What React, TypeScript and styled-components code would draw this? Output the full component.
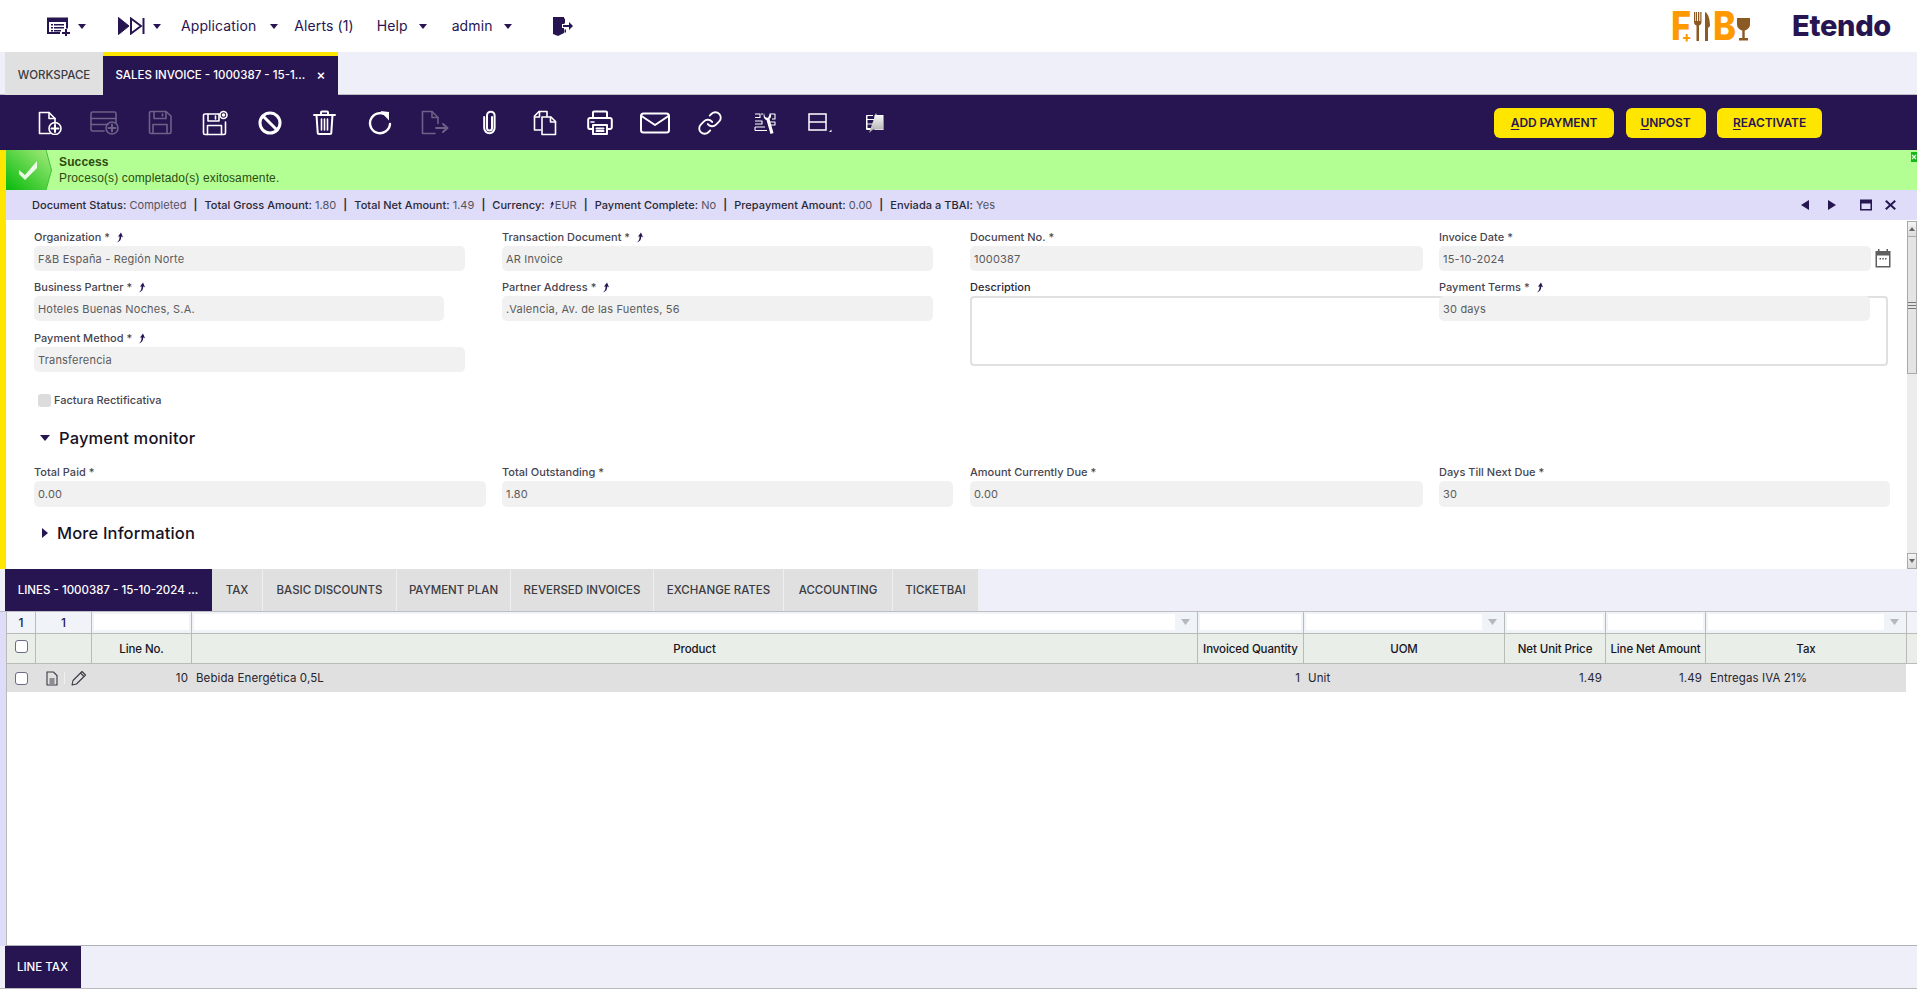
import React from "react";
import styled, { createGlobalStyle } from "styled-components";
import { Link as LinkIcon } from "lucide-react";

const NAVY = "#271552";
const YELLOW = "#FEE600";
const LILAC = "#DEDCF8";
const PALE = "#EEEFF8";
const TABGRAY = "#E0E0E0";
const LINE = "#B7BCB7";

const Global = createGlobalStyle`
  html, body { margin: 0; padding: 0; height: 100%; background: #fff; overflow: hidden; }
  body { font-family: "Inter", "Liberation Sans", sans-serif; color: ${NAVY}; }
  #root { height: 100%; }
  * { box-sizing: border-box; }
`;

const Page = styled.div`
  width: 1917px;
  height: 989px;
  display: flex;
  flex-direction: column;
  overflow: hidden;
`;

/* ---------- top nav ---------- */
const NavBar = styled.header`
  height: 52px;
  flex: none;
  display: flex;
  align-items: center;
  padding-left: 47px;
  padding-right: 26px;
  background: #fff;
`;
const NavItem = styled.div<{ $ml: number }>`
  margin-left: ${(p) => p.$ml}px;
  display: flex;
  align-items: center;
  font-size: 14px;
  line-height: 20px;
  letter-spacing: 0.1px;
  color: ${NAVY};
`;
const NavCaret = styled.i<{ $ml: number }>`
  display: block;
  margin-left: ${(p) => p.$ml}px;
  width: 0;
  height: 0;
  border-left: 4.5px solid transparent;
  border-right: 4.5px solid transparent;
  border-top: 5px solid ${NAVY};
`;
const Brand = styled.div`
  margin-left: auto;
  display: flex;
  align-items: center;
  gap: 41px;
`;
const Wordmark = styled.span`
  font-size: 29px;
  line-height: 32px;
  font-weight: 800;
  letter-spacing: -0.3px;
  color: ${NAVY};
`;

/* ---------- tab strips ---------- */
const TabBar = styled.nav`
  height: 43px;
  flex: none;
  display: flex;
  padding-left: 5px;
  background: ${PALE};
  border-bottom: 1px solid #bdbdc4;
`;
const Tab = styled.div<{ $w: number; $active?: boolean }>`
  width: ${(p) => p.$w}px;
  flex: none;
  display: flex;
  align-items: center;
  justify-content: center;
  gap: 11px;
  padding-top: ${(p) => (p.$active ? 0 : 0)}px;
  font-size: 11.5px;
  font-weight: 500;
  white-space: nowrap;
  background: ${(p) => (p.$active ? NAVY : TABGRAY)};
  color: ${(p) => (p.$active ? "#fff" : "#3b3b42")};
  border-right: 1px solid ${(p) => (p.$active ? NAVY : "#efeff2")};
`;
const MainTab = styled(Tab)`
  border-top: 4px solid ${(p) => (p.$active ? YELLOW : TABGRAY)};
  border-right: none;
  padding-bottom: 2px;
  margin-bottom: -1px;
`;
const TabClose = styled.span`
  font-size: 14px;
  line-height: 14px;
  color: #fff;
`;

/* ---------- toolbar ---------- */
const Toolbar = styled.div`
  height: 55px;
  flex: none;
  display: flex;
  align-items: center;
  padding-left: 22px;
  padding-right: 95px;
  background: ${NAVY};
`;
const ToolSlot = styled.div<{ $disabled?: boolean }>`
  width: 55px;
  height: 30px;
  flex: none;
  display: flex;
  align-items: center;
  justify-content: center;
  color: ${(p) => (p.$disabled ? "#6c6186" : "#fff")};
`;
const ActionGroup = styled.div`
  margin-left: auto;
  display: flex;
  gap: 11.5px;
`;
const ActionButton = styled.button<{ $w: number }>`
  width: ${(p) => p.$w}px;
  height: 30px;
  border: none;
  border-radius: 6px;
  background: ${YELLOW};
  color: ${NAVY};
  font-family: inherit;
  font-size: 12px;
  font-weight: 600;
  letter-spacing: -0.1px;
  padding: 0;
  u { text-underline-offset: 2px; }
`;

/* ---------- header area with yellow strip ---------- */
const HeaderPane = styled.section`
  height: 419px;
  flex: none;
  display: flex;
  flex-direction: column;
  border-left: 6px solid ${YELLOW};
`;
const MessageBar = styled.div`
  height: 40px;
  flex: none;
  position: relative;
  display: flex;
  background: #b3ff94;
  font-family: "Liberation Sans", Arial, sans-serif;
  font-size: 12px;
  color: #2f4a10;
`;
const MessageTexts = styled.div`
  margin-left: 7px;
  padding-top: 5px;
  display: flex;
  flex-direction: column;
  gap: 2px;
  line-height: 14px;
  letter-spacing: 0.13px;
`;
const MessageTitle = styled.strong`
  font-weight: 700;
`;
const MessageClose = styled.svg`
  position: absolute;
  right: 0;
  top: 2px;
`;
const StatusBar = styled.div`
  height: 30px;
  flex: none;
  display: flex;
  align-items: center;
  padding-left: 26px;
  background: ${LILAC};
  font-size: 11px;
  letter-spacing: 0.03px;
  color: #55535f;
  white-space: nowrap;
  b { font-weight: 500; color: #2a2836; }
  em { font-style: normal; font-weight: 600; color: #2a2836; margin: 0 7px; }
`;
const StatusTools = styled.div`
  margin-left: auto;
  display: flex;
  align-items: center;
  padding-right: 20px;
`;
const FormRow = styled.div`
  flex: 1;
  min-height: 0;
  display: flex;
`;
const FormBody = styled.div`
  flex: 1;
  min-width: 0;
  padding: 8px 0 0 28px;
`;
const FieldGrid = styled.div`
  display: grid;
  grid-template-columns: 468px 468px 469px 452px;
`;
const Field = styled.div<{ $span?: number; $gap?: number }>`
  grid-row: span ${(p) => p.$span ?? 1};
  padding-bottom: ${(p) => p.$gap ?? 7}px;
`;
const Label = styled.label<{ $strong?: boolean }>`
  height: 18px;
  display: flex;
  align-items: center;
  gap: 5px;
  font-size: 11px;
  font-weight: 500;
  letter-spacing: 0.02px;
  color: ${(p) => (p.$strong ? "#2a2836" : "#46444f")};
  white-space: nowrap;
`;
const InputRow = styled.div`
  display: flex;
  align-items: center;
  gap: 4px;
`;
const Input = styled.div<{ $w: number; $h?: number }>`
  width: ${(p) => p.$w}px;
  height: ${(p) => p.$h ?? 25}px;
  flex: none;
  display: flex;
  align-items: center;
  padding-left: 4px;
  background: #f1f1f1;
  border-radius: 5px;
  font-size: 11px;
  letter-spacing: 0.2px;
  color: #5b5b5b;
`;
const TextArea = styled.div`
  width: 918px;
  height: 70px;
  background: #fff;
  border: 2px solid #e0e0e0;
  border-radius: 4px;
`;
const CheckRow = styled.div`
  margin: 20px 0 0 4px;
  display: flex;
  align-items: center;
  gap: 3px;
  font-size: 11px;
  font-weight: 500;
  color: #46444f;
`;
const FakeCheck = styled.span`
  width: 13px;
  height: 13px;
  border-radius: 3px;
  background: #dcdcdc;
`;
const Section = styled.div<{ $mt: number }>`
  margin-top: ${(p) => p.$mt}px;
  height: 24px;
  display: flex;
  align-items: center;
  gap: 7px;
  padding-left: 6px;
  font-size: 16.5px;
  font-weight: 500;
  letter-spacing: 0.15px;
  color: #15121f;
`;
const SectionFields = styled(FieldGrid)`
  margin-top: 13px;
`;
const CaretDown = styled.i`
  width: 0;
  height: 0;
  margin-right: 2px;
  border-left: 5px solid transparent;
  border-right: 5px solid transparent;
  border-top: 6px solid ${NAVY};
`;
const CaretRight = styled.i`
  width: 0;
  height: 0;
  margin: 0 2px 0 2px;
  border-top: 5px solid transparent;
  border-bottom: 5px solid transparent;
  border-left: 6px solid ${NAVY};
`;
const Scrollbar = styled.div`
  width: 10px;
  flex: none;
  margin-top: 1px;
  display: flex;
  flex-direction: column;
  background: #ececec;
`;
const ScrollButton = styled.div`
  height: 16px;
  flex: none;
  display: flex;
  align-items: center;
  justify-content: center;
  border: 1px solid #a9a9a9;
  background: linear-gradient(#f4f4f4, #dcdcdc);
`;
const ScrollThumb = styled.div`
  height: 137px;
  flex: none;
  display: flex;
  align-items: center;
  justify-content: center;
  border: 1px solid #a9a9a9;
  border-top: none;
  background: #e4e4e4;
`;
const ScrollTrack = styled.div`
  flex: 1;
`;

/* ---------- grid ---------- */
const COLS = "29px 56px 100px 1006px 106px 201px 101px 100px 201px 1fr";
const GridPane = styled.section`
  flex: 1;
  min-height: 0;
  display: flex;
  flex-direction: column;
  border-left: 6px solid ${LILAC};
`;
const GridFrame = styled.div`
  flex: 1;
  border-left: 1px solid ${LINE};
  border-bottom: 1px solid #b0b0b8;
  background: #fff;
`;
const FilterRow = styled.div`
  height: 22px;
  display: grid;
  grid-template-columns: ${COLS};
  background: #f0f3f8;
  border-bottom: 1px solid ${LINE};
`;
const FilterCell = styled.div`
  display: flex;
  align-items: stretch;
  padding: 2px 2px 3px 2px;
  border-right: 1px solid ${LINE};
  &:last-child { border-right: none; }
`;
const CountCell = styled(FilterCell)`
  align-items: center;
  justify-content: center;
  font-size: 12px;
  font-weight: 500;
  color: ${NAVY};
`;
const FilterInput = styled.div`
  flex: 1;
  background: #fff;
`;
const FilterArrow = styled.div`
  width: 20px;
  flex: none;
  display: flex;
  align-items: center;
  justify-content: center;
`;
const HeaderRow = styled.div`
  height: 30px;
  display: grid;
  grid-template-columns: ${COLS};
  background: #e9eee8;
  border-bottom: 1px solid ${LINE};
`;
const HeaderCell = styled.div`
  display: flex;
  align-items: center;
  justify-content: center;
  border-right: 1px solid ${LINE};
  font-size: 11.5px;
  font-weight: 500;
  letter-spacing: -0.1px;
  color: #17141f;
  white-space: nowrap;
  overflow: hidden;
  &:last-child { border-right: none; }
`;
const BoxCell = styled(HeaderCell)`
  align-items: flex-start;
  padding-top: 6px;
`;
const CheckBox = styled.span`
  width: 13px;
  height: 13px;
  display: block;
  background: #fff;
  border: 1px solid #6c6a86;
  border-radius: 3px;
`;
const DataRow = styled.div`
  height: 28px;
  width: 1899px;
  display: grid;
  grid-template-columns: 29px 56px 100px 1006px 106px 201px 101px 100px 201px;
  background: ${TABGRAY};
  font-size: 11.5px;
  letter-spacing: 0.1px;
  color: #26242e;
`;
const DataCell = styled.div<{ $right?: boolean }>`
  display: flex;
  align-items: center;
  justify-content: ${(p) => (p.$right ? "flex-end" : "flex-start")};
  padding: 0 4px;
  white-space: nowrap;
`;
const RowIcons = styled(DataCell)`
  gap: 6px;
  padding: 0 0 0 10px;
`;
const RowCheckCell = styled(DataCell)`
  justify-content: center;
  padding: 0;
`;
const RowDivider = styled.span`
  width: 1px;
  height: 12px;
  background: #efefef;
`;
const BottomBar = styled(TabBar)`
  border-bottom: 1px solid #b9b9c0;
`;

/* ---------- icons ---------- */
const Ico: React.FC<{ w: number; h: number; children: React.ReactNode }> = ({ w, h, children }) => (
  <svg width={w} height={h} viewBox={`0 0 ${w} ${h}`} fill="none" stroke="currentColor" strokeWidth={1.6} strokeLinejoin="round" strokeLinecap="round">
    {children}
  </svg>
);
const PlusDisc: React.FC<{ cx: number; cy: number; r?: number }> = ({ cx, cy, r = 6 }) => (
  <>
    <circle cx={cx} cy={cy} r={r} />
    <path d={`M${cx - r + 2.5} ${cy}h${2 * r - 5}M${cx} ${cy - r + 2.5}v${2 * r - 5}`} strokeWidth={2} />
  </>
);
const Arrow: React.FC = () => (
  <svg width="9" height="11" viewBox="0 0 9 11" fill={NAVY}>
    <path d="M2 10.5 C4.2 8.6 4.8 6.6 4.4 4.2 L2.8 4.8 L6 0.5 L8 5.2 L6.2 4.6 C6.4 7.4 5 9.6 2 10.5Z" />
  </svg>
);
const TinyArrow: React.FC = () => (
  <svg width="7" height="8" viewBox="0 0 9 11" fill={NAVY}>
    <path d="M2 10.5 C4.2 8.6 4.8 6.6 4.4 4.2 L2.8 4.8 L6 0.5 L8 5.2 L6.2 4.6 C6.4 7.4 5 9.6 2 10.5Z" />
  </svg>
);
const GreyDown: React.FC = () => (
  <svg width="9" height="6" viewBox="0 0 9 6"><path d="M0 0h9L4.5 6z" fill="#b5b8bd" /></svg>
);

const TOOLS: { d?: boolean; node: React.ReactNode }[] = [
  { node: <Ico w={24} h={24}><path d="M12 22.5H1.5v-21H11l6 6v5" /><path d="M11 1.5v6h6" /><PlusDisc cx={17} cy={17.5} /></Ico> },
  { d: true, node: <Ico w={29} h={25}><path d="M14 21H2.5a1.5 1.5 0 0 1-1.5-1.5v-16A1.5 1.5 0 0 1 2.5 2h22A1.5 1.5 0 0 1 26 3.500v10" /><path d="M1 8.500h25M1 14.500h17" /><PlusDisc cx={22} cy={18} /></Ico> },
  { d: true, node: <Ico w={24} h={25}><path d="M3 1.500h15l5 4.500v16a1.500 1.500 0 0 1-1.500 1.500H3A1.500 1.500 0 0 1 1.500 22V3A1.500 1.500 0 0 1 3 1.500z" /><path d="M6 1.500v7h12v-7M14.500 4v2M5 23.500v-9h14v9" /></Ico> },
  { node: <Ico w={26} h={26}><path d="M17 4H3a1.500 1.500 0 0 0-1.500 1.500V23A1.500 1.500 0 0 0 3 24.500h19a1.500 1.500 0 0 0 1.500-1.500V12" /><path d="M6 4v7h11V4M13.500 6v3M5.500 24.500v-9h14v9" /><circle cx="21.500" cy="5" r="3.500" /><circle cx="21.500" cy="5" r="1" fill="currentColor" /></Ico> },
  { node: <Ico w={24} h={24}><circle cx="12" cy="12" r="10" strokeWidth={3} /><path d="M5 5l14 14" strokeWidth={3} /></Ico> },
  { node: <Ico w={23} h={25}><path d="M1 5h21M8 5V2.500A1 1 0 0 1 9 1.500h5a1 1 0 0 1 1 1V5" strokeWidth={2} /><path d="M3.500 5l1.200 17.500A1.500 1.500 0 0 0 6.200 24h10.600a1.500 1.500 0 0 0 1.500-1.500L19.500 5" strokeWidth={2} /><path d="M8.500 9v11M11.500 9v11M14.500 9v11" /></Ico> },
  { node: <Ico w={25} h={25}><path d="M20.500 6.500A10 10 0 1 0 23 14" strokeWidth={2.400} /><path d="M13.500 1l8.500 1v8.500z" fill="currentColor" stroke="none" /></Ico> },
  { d: true, node: <Ico w={28} h={25}><path d="M14 23.500H1.500v-22H11l6 6v6" /><path d="M11 1.500v6h6" /><path d="M15 18h11M22 14l4.500 4-4.500 4" strokeWidth={2} /></Ico> },
  { node: <Ico w={17} h={25}><path d="M12.500 6.500V18a4 4 0 0 1-8 0V6a4.500 4.500 0 0 1 4.500-4.500" transform="translate(0 0)" strokeWidth={0} /><path d="M11 7v11a2.500 2.500 0 0 1-5 0V5.500a3.800 3.800 0 0 1 7.600 0V18a5.200 5.200 0 0 1-10.400 0V7" strokeWidth={2} /></Ico> },
  { node: <Ico w={24} h={26}><path d="M8 20H1.500V6L6 1.500h8v5" /><path d="M6.500 1.500V7H1.500" /><path d="M9 7h9l4.500 4.500V24.500H9z" /><path d="M17.500 7v5h5" /></Ico> },
  { node: <Ico w={26} h={25}><path d="M6 8V2.500A1 1 0 0 1 7 1.500h12a1 1 0 0 1 1 1V8" strokeWidth={2} /><path d="M6 19H3a1.800 1.800 0 0 1-1.800-1.800V9.800A1.800 1.800 0 0 1 3 8h20a1.800 1.800 0 0 1 1.800 1.800v7.400A1.800 1.800 0 0 1 23 19h-3" strokeWidth={2} /><path d="M6 15h14v9H6zM9.500 18.500h7M9.500 21h7" strokeWidth={2} /><path d="M4 12h3" /></Ico> },
  { node: <Ico w={30} h={22}><rect x="1" y="1.500" width="28" height="19" rx="2.500" strokeWidth={2} /><path d="M1.500 4l13.500 9L28.500 4" strokeWidth={2} /></Ico> },
  { node: <LinkIcon size={26} strokeWidth={1.7} /> },
  { node: <Ico w={22} h={22}><path d="M1 2h5v3.500H1M9 2H7M15.500 2H21v5h-3M1 9h7v3H1M16 10h5v3h-4M1 15h10M1 18.500h12M1 15v3.500" strokeWidth={1.100} strokeLinecap="butt" /><path d="M10 1l1 4 3 1 2-4.500a3.500 3.500 0 0 1-.500 5.500l4 14-3 1L12.500 8C10 7.500 9 4 10 1z" fill="currentColor" stroke="none" /></Ico> },
  { node: <svg width="24" height="20" viewBox="0 0 24 20" fill="none" stroke="currentColor" strokeWidth={1.500}><rect x="1" y="1" width="17" height="16" /><path d="M1 9h17" /><path d="M21 19h2.500v-2.500z" fill="currentColor" stroke="none" /></svg> },
  { node: <svg width="20" height="22" viewBox="0 0 20 22" fill="none" stroke="currentColor" strokeWidth={1}><path d="M8 3.500H2v13h6M1 7.500h9M1 12h8M3 3.500L1.500 3.500v14h6" /><rect x="10" y="3.500" width="8" height="14" /><path d="M4 21L11 1l1 3 6 0v13.500H8z" fill="url(#pen)" stroke="none" /><defs><linearGradient id="pen" x1="0" y1="0" x2="0" y2="1"><stop offset="0" stopColor="#fff" /><stop offset="1" stopColor="#aaa" /></linearGradient></defs></svg> },
];

const STATUS: [string, React.ReactNode][] = [
  ["Document Status:", "Completed"],
  ["Total Gross Amount:", "1.80"],
  ["Total Net Amount:", "1.49"],
  ["Currency:", <><TinyArrow /> EUR</>],
  ["Payment Complete:", "No"],
  ["Prepayment Amount:", "0.00"],
  ["Enviada a TBAI:", "Yes"],
];

const SUBTABS: [string, number][] = [
  ["TAX", 51],
  ["BASIC DISCOUNTS", 134],
  ["PAYMENT PLAN", 114],
  ["REVERSED INVOICES", 143],
  ["EXCHANGE RATES", 130],
  ["ACCOUNTING", 109],
  ["TICKETBAI", 86],
];

export default function App() {
  return (
    <Page>
      <Global />
      <NavBar>
        <NavItem $ml={0}>
          <svg width="23" height="20" viewBox="0 0 23 20" fill={NAVY}>
            <path fillRule="evenodd" d="M0 1.500h21v11h-2V6H2v10h11v2H0zM4 8h2v1.500H4zm3 0h10v1.500H7zM4 11h2v1.500H4zm3 0h10v1.500H7zM4 14h2v1.500H4zm3 0h7v1.500H7z" />
            <path d="M18 13h2v3h3v2h-3v2h-2v-2h-3v-2h3z" />
          </svg>
          <NavCaret $ml={8} />
        </NavItem>
        <NavItem $ml={32}>
          <svg width="27" height="18" viewBox="0 0 27 18" fill="none" stroke={NAVY}>
            <path d="M0.500 0.500L11 9 .5 17.500z" fill={NAVY} />
            <path d="M13 1.500L23 9 13 16.500z" strokeWidth={2} />
            <path d="M25.500 1v16" strokeWidth={2} />
          </svg>
          <NavCaret $ml={8} />
        </NavItem>
        <NavItem $ml={20}>Application<NavCaret $ml={14} /></NavItem>
        <NavItem $ml={16}>Alerts (1)</NavItem>
        <NavItem $ml={23}>Help<NavCaret $ml={11} /></NavItem>
        <NavItem $ml={25}>admin<NavCaret $ml={11} /></NavItem>
        <NavItem $ml={41}>
          <svg width="20" height="19" viewBox="0 0 20 19" fill={NAVY}>
            <path d="M0 0h11v7H9v4h2v5l-6 3-5-2z" />
            <path d="M12 0v6.500h-1.500V1.500H12zM11.500 12.500H13v3h-1.500z" />
            <path d="M10 8h6V5l4 4-4 4v-3h-6z" />
          </svg>
        </NavItem>
        <Brand>
          <svg width="80" height="31" viewBox="0 0 80 31">
            <text x="0" y="29" fontFamily="Inter, sans-serif" fontWeight="800" fontSize="40" fill="#FF9900" textLength="20" lengthAdjust="spacingAndGlyphs">F</text>
            <text x="11" y="31" fontFamily="Inter, sans-serif" fontWeight="800" fontSize="14" fill="#FF9900">+</text>
            <path d="M23 1v10c0 2 1 3 2.500 3.500V30h2.500V14.500C29.500 14 30.500 13 30.500 11V1h-1.200v9h-1V1h-1.300v9h-1V1h-1.300v9h-.7V1z" fill="#8B5A24" />
            <path d="M34 30V1c3 1 5 7 5 14l-2 2v13z" fill="#8B5A24" />
            <text x="42" y="29" fontFamily="Inter, sans-serif" fontWeight="800" fontSize="40" fill="#FF9900" textLength="23" lengthAdjust="spacingAndGlyphs">B</text>
            <path d="M66 7h13v6c0 4-3 6-5.300 6.500V27H77v2.500H68V27h3.300v-7.500C69 19 66 17 66 13z" fill="#8B5A24" />
          </svg>
          <Wordmark>Etendo</Wordmark>
        </Brand>
      </NavBar>

      <TabBar>
        <MainTab $w={98}>WORKSPACE</MainTab>
        <MainTab $w={235} $active>SALES INVOICE - 1000387 - 15-1...<TabClose>×</TabClose></MainTab>
      </TabBar>

      <Toolbar>
        {TOOLS.map((t, i) => (
          <ToolSlot key={i} $disabled={t.d}>{t.node}</ToolSlot>
        ))}
        <ActionGroup>
          <ActionButton $w={120}><u>A</u>DD PAYMENT</ActionButton>
          <ActionButton $w={80}><u>U</u>NPOST</ActionButton>
          <ActionButton $w={105}><u>R</u>EACTIVATE</ActionButton>
        </ActionGroup>
      </Toolbar>

      <HeaderPane>
        <MessageBar>
          <svg width="46" height="40" viewBox="0 0 46 40">
            <defs>
              <linearGradient id="okg" x1="0" y1="1" x2="1" y2="0">
                <stop offset="0" stopColor="#07b90a" />
                <stop offset="1" stopColor="#a6ec7e" />
              </linearGradient>
            </defs>
            <path d="M0 0h40l5.500 20L40 40H0z" fill="url(#okg)" />
            <path d="M40 0l5.500 20L40 40" fill="none" stroke="#3fc13a" />
            <path d="M13 20l6 5L31 11v7L19 30l-6-6z" fill="#fff" fillOpacity="0.88" />
          </svg>
          <MessageTexts>
            <MessageTitle>Success</MessageTitle>
            <span>Proceso(s) completado(s) exitosamente.</span>
          </MessageTexts>
          <MessageClose width="6" height="10" viewBox="0 0 6 10">
            <path d="M0 0h6v10H0z" fill="#17b81a" />
            <path d="M1 3l4 4M5 3L1 7" stroke="#e8ffe0" strokeWidth="1.200" />
          </MessageClose>
        </MessageBar>

        <StatusBar>
          {STATUS.map(([k, v], i) => (
            <React.Fragment key={k}>
              {i > 0 && <em>|</em>}
              <b>{k}</b>&nbsp;{v}
            </React.Fragment>
          ))}
          <StatusTools>
            <svg width="96" height="14" viewBox="0 0 96 14" fill={NAVY}>
              <path d="M8 2v10L0 7zM27 2l8 5-8 5z" />
              <path fillRule="evenodd" d="M59 1.500h12v11H59zM60.500 5.500v5.500h9V5.500z" />
              <path d="M85.500 2l4 3.800L93.500 2l1.400 1.400L91 7l3.900 3.600-1.400 1.400-4-3.800-4 3.800-1.400-1.400L88 7l-3.900-3.600z" />
            </svg>
          </StatusTools>
        </StatusBar>

        <FormRow>
          <FormBody>
            <FieldGrid>
              <Field><Label>Organization * <Arrow /></Label><Input $w={431}>F&amp;B España - Región Norte</Input></Field>
              <Field><Label>Transaction Document * <Arrow /></Label><Input $w={431}>AR Invoice</Input></Field>
              <Field><Label>Document No. *</Label><Input $w={453}>1000387</Input></Field>
              <Field>
                <Label>Invoice Date *</Label>
                <InputRow>
                  <Input $w={432}>15-10-2024</Input>
                  <svg width="16" height="19" viewBox="0 0 16 19">
                    <path d="M3 0h1.500v2h7V0H13v2h2.500v16.500H.5V2H3z" fill="#5f5f5f" />
                    <path d="M2 6.500h12v10.500H2z" fill="#fff" />
                    <path d="M4.500 9h1.500v1.500H4.500zM7.300 9h1.500v1.500H7.300zM10 9h1.500v1.500H10z" fill="#5f5f5f" />
                  </svg>
                </InputRow>
              </Field>
              <Field><Label>Business Partner * <Arrow /></Label><Input $w={410}>Hoteles Buenas Noches, S.A.</Input></Field>
              <Field><Label>Partner Address * <Arrow /></Label><Input $w={431}>.Valencia, Av. de las Fuentes, 56</Input></Field>
              <Field $span={2}><Label $strong>Description</Label><TextArea /></Field>
              <Field $gap={0}><Label>Payment Terms * <Arrow /></Label><Input $w={431}>30 days</Input></Field>
              <Field $gap={0}><Label>Payment Method * <Arrow /></Label><Input $w={431}>Transferencia</Input></Field>
            </FieldGrid>
            <CheckRow><FakeCheck />Factura Rectificativa</CheckRow>
            <Section $mt={19}><CaretDown />Payment monitor</Section>
            <SectionFields>
              <Field $gap={0}><Label>Total Paid *</Label><Input $w={452} $h={26}>0.00</Input></Field>
              <Field $gap={0}><Label>Total Outstanding *</Label><Input $w={451} $h={26}>1.80</Input></Field>
              <Field $gap={0}><Label>Amount Currently Due *</Label><Input $w={453} $h={26}>0.00</Input></Field>
              <Field $gap={0}><Label>Days Till Next Due *</Label><Input $w={451} $h={26}>30</Input></Field>
            </SectionFields>
            <Section $mt={14}><CaretRight />More Information</Section>
          </FormBody>
          <Scrollbar>
            <ScrollButton><svg width="6" height="4" viewBox="0 0 6 4"><path d="M0 4h6L3 0z" fill="#666" /></svg></ScrollButton>
            <ScrollThumb><svg width="8" height="7" viewBox="0 0 8 7"><path d="M0 .5h8M0 3.500h8M0 6.500h8" stroke="#777" /></svg></ScrollThumb>
            <ScrollTrack />
            <ScrollButton><svg width="6" height="4" viewBox="0 0 6 4"><path d="M0 0h6L3 4z" fill="#666" /></svg></ScrollButton>
          </Scrollbar>
        </FormRow>
      </HeaderPane>

      <TabBar>
        <Tab $w={207} $active>LINES - 1000387 - 15-10-2024 ...</Tab>
        {SUBTABS.map(([t, w]) => <Tab key={t} $w={w}>{t}</Tab>)}
      </TabBar>

      <GridPane>
        <GridFrame>
          <FilterRow>
            <CountCell>1</CountCell>
            <CountCell>1</CountCell>
            <FilterCell><FilterInput /></FilterCell>
            <FilterCell><FilterInput /><FilterArrow><GreyDown /></FilterArrow></FilterCell>
            <FilterCell><FilterInput /></FilterCell>
            <FilterCell><FilterInput /><FilterArrow><GreyDown /></FilterArrow></FilterCell>
            <FilterCell><FilterInput /></FilterCell>
            <FilterCell><FilterInput /></FilterCell>
            <FilterCell><FilterInput /><FilterArrow><GreyDown /></FilterArrow></FilterCell>
            <FilterCell />
          </FilterRow>
          <HeaderRow>
            <BoxCell><CheckBox /></BoxCell>
            <HeaderCell />
            <HeaderCell>Line No.</HeaderCell>
            <HeaderCell>Product</HeaderCell>
            <HeaderCell>Invoiced Quantity</HeaderCell>
            <HeaderCell>UOM</HeaderCell>
            <HeaderCell>Net Unit Price</HeaderCell>
            <HeaderCell>Line Net Amount</HeaderCell>
            <HeaderCell>Tax</HeaderCell>
            <HeaderCell />
          </HeaderRow>
          <DataRow>
            <RowCheckCell><CheckBox /></RowCheckCell>
            <RowIcons>
              <svg width="12" height="15" viewBox="0 0 12 15" fill="none" stroke="#3b3946" strokeWidth="1.100">
                <path d="M1 1h6.500L11 4.500V14H1z" />
                <path d="M3.500 8h5M3.500 10h5M3.500 12h5" />
              </svg>
              <RowDivider />
              <svg width="16" height="16" viewBox="0 0 16 16" fill="none" stroke="#3b3946" strokeWidth="1.100" strokeLinejoin="round">
                <path d="M11 1.500l3.500 3.500L5.500 14 1 15l1-4.500z" />
                <path d="M9.500 3l3.500 3.500" />
              </svg>
            </RowIcons>
            <DataCell $right>10</DataCell>
            <DataCell>Bebida Energética 0,5L</DataCell>
            <DataCell $right>1</DataCell>
            <DataCell>Unit</DataCell>
            <DataCell $right>1.49</DataCell>
            <DataCell $right>1.49</DataCell>
            <DataCell>Entregas IVA 21%</DataCell>
          </DataRow>
        </GridFrame>
      </GridPane>

      <BottomBar>
        <Tab $w={76} $active>LINE TAX</Tab>
      </BottomBar>
    </Page>
  );
}
